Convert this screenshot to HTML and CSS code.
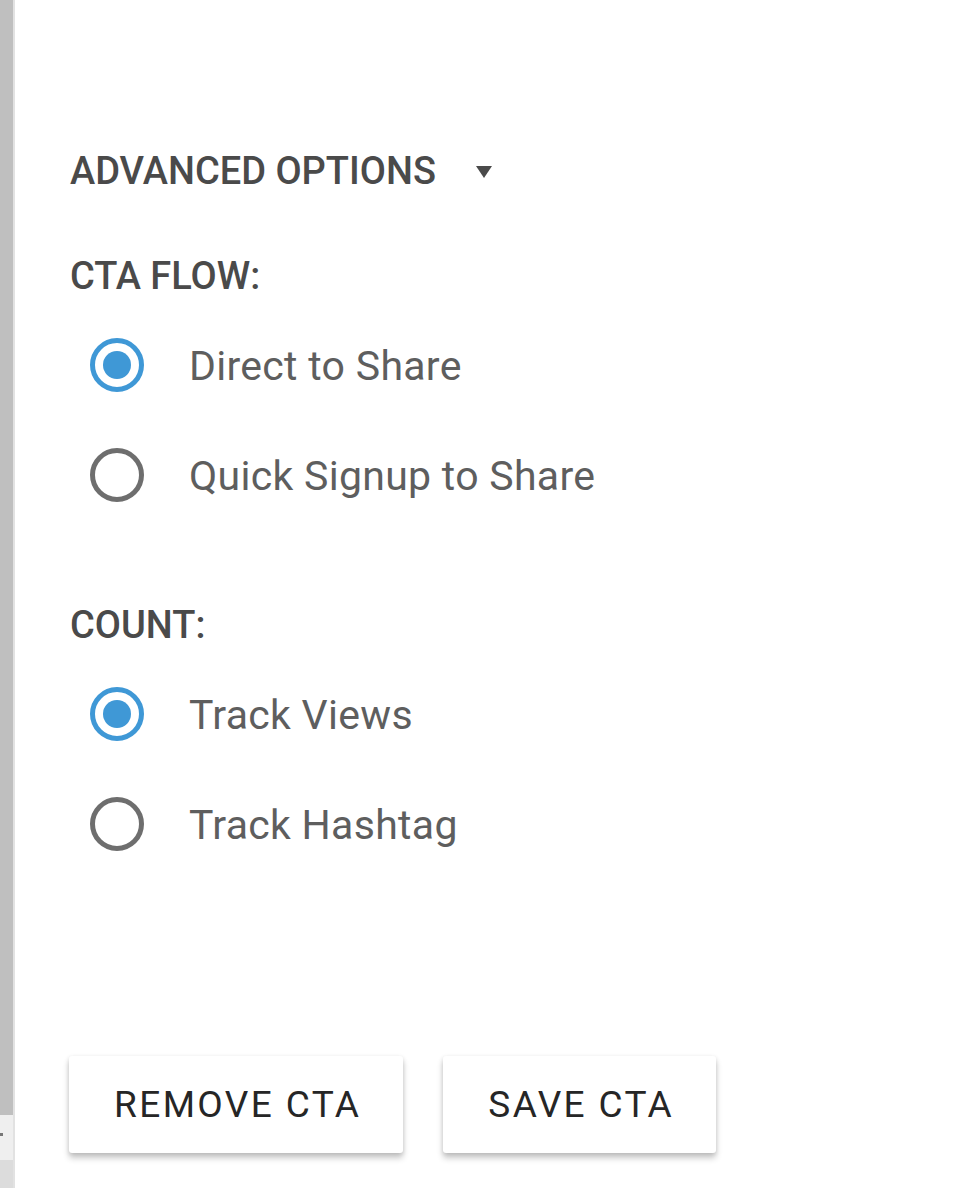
FILE: index.html
```html
<!DOCTYPE html>
<html>
<head>
<meta charset="utf-8">
<link rel="stylesheet" href="styles.css">
</head>
<body>
<div class="page">
  <div class="rail">
    <div class="rail-top"></div>
    <div class="rail-gap"><span class="rail-mark"></span></div>
    <div class="rail-bottom"></div>
  </div>
  <div class="panel">
    <div class="adv">
      <span class="heading">ADVANCED OPTIONS</span>
      <span class="caret"></span>
    </div>
    <div class="group group-first">
      <div class="heading label-head">CTA FLOW:</div>
      <div class="radio-row">
        <span class="radio checked"></span>
        <span class="radio-label">Direct to Share</span>
      </div>
      <div class="radio-row">
        <span class="radio"></span>
        <span class="radio-label">Quick Signup to Share</span>
      </div>
    </div>
    <div class="group group-second">
      <div class="heading label-head">COUNT:</div>
      <div class="radio-row">
        <span class="radio checked"></span>
        <span class="radio-label">Track Views</span>
      </div>
      <div class="radio-row">
        <span class="radio"></span>
        <span class="radio-label">Track Hashtag</span>
      </div>
    </div>
    <div class="actions">
      <button class="btn btn-remove">REMOVE CTA</button>
      <button class="btn btn-save">SAVE CTA</button>
    </div>
  </div>
</div>
</body>
</html>
```

FILE: styles.css
```css
html, body {
  margin: 0;
  padding: 0;
  background: #ffffff;
}
.page {
  display: flex;
  width: 980px;
  height: 1188px;
  overflow: hidden;
  font-family: Roboto, "Liberation Sans", sans-serif;
}
.rail {
  width: 13px;
  flex: none;
  display: flex;
  flex-direction: column;
  border-right: 2px solid #e2e2e2;
}
.rail-top {
  height: 1115px;
  background: #bfbfbf;
}
.rail-gap {
  height: 45px;
  background: #efefef;
  display: flex;
  align-items: center;
}
.rail-mark {
  width: 3px;
  height: 3px;
  background: #777;
  margin-top: -6px;
}
.rail-bottom {
  flex: 1;
  background: #dcdcdc;
}
.panel {
  padding-left: 55px;
  display: flex;
  flex-direction: column;
}
.heading {
  font-size: 38px;
  font-weight: 500;
  color: #4a4a4a;
  line-height: 40px;
}
.adv {
  margin-top: 151px;
  display: flex;
  align-items: center;
}
.caret {
  margin-left: 40px;
  width: 0;
  height: 0;
  border-left: 8px solid transparent;
  border-right: 8px solid transparent;
  border-top: 12px solid #4a4a4a;
  margin-top: 2px;
}
.label-head {
  margin-bottom: 15px;
}
.group-first {
  margin-top: 65px;
}
.group-second {
  margin-top: 74px;
}
.radio-row {
  height: 110px;
  display: flex;
  align-items: center;
  padding-left: 20px;
}
.radio {
  box-sizing: border-box;
  width: 54px;
  height: 54px;
  border-radius: 50%;
  border: 5px solid #6e6e6e;
  flex: none;
  display: flex;
  align-items: center;
  justify-content: center;
  margin-top: -3px;
}
.radio.checked {
  border-color: #3f98d6;
}
.radio.checked::after {
  content: "";
  width: 28px;
  height: 28px;
  border-radius: 50%;
  background: #3f98d6;
}
.radio-label {
  margin-left: 45px;
  font-size: 41px;
  color: #5e5e5e;
  line-height: 110px;
  letter-spacing: 0.3px;
}
.actions {
  margin-top: 176px;
  margin-left: -1px;
  display: flex;
  gap: 40px;
}
.btn {
  height: 97px;
  padding: 0 42px 0 45px;
  border: none;
  background: #ffffff;
  font-family: Roboto, "Liberation Sans", sans-serif;
  font-size: 37px;
  font-weight: 400;
  color: #262626;
  letter-spacing: 2.4px;
  border-radius: 3px;
  box-shadow: 0 5px 6px rgba(0,0,0,0.22), 0 1px 4px rgba(0,0,0,0.10);
}
```
